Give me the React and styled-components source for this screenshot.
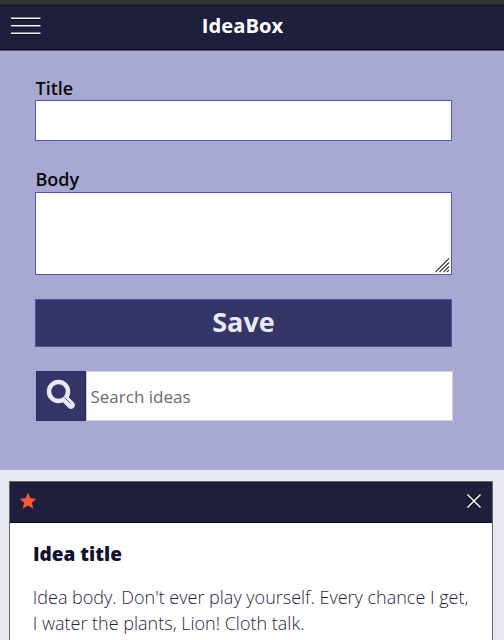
import React from 'react';
import styled, { createGlobalStyle } from 'styled-components';

const GlobalStyle = createGlobalStyle`
  * { box-sizing: border-box; }
  html, body { margin: 0; height: 640px; overflow: hidden; }
  body { background: #e8e8f3; font-family: "Open Sans", sans-serif; }
`;

const Page = styled.div`
  width: 504px;
  height: 640px;
  overflow: hidden;
`;

const TopStrip = styled.div`
  height: 5px;
  background: #333;
  border-bottom: 1px solid #29282c;
`;

const Header = styled.header`
  height: 46px;
  display: grid;
  grid-template-columns: 42px 1fr 57px;
  align-items: center;
  background: #1f1e3d;
  border-top: 1px solid #14132c;
  border-bottom: 1px solid #57567f;
  box-shadow: inset 0 -1px 0 #09082a;
`;

const MenuButton = styled.button`
  display: flex;
  width: 30px;
  margin: -4px 0 0 11px;
  padding: 0;
  border: 0;
  background: none;
`;

const AppTitle = styled.h1`
  margin: -6px 0 0 -4px;
  text-align: center;
  color: #fff;
  font-size: 20.2px;
  line-height: 28px;
  font-weight: 700;
`;

const Form = styled.form`
  height: 419px;
  padding: 25px 52px 0 35px;
  background: #a8a9d3;
  display: flex;
  flex-direction: column;
`;

const Label = styled.label`
  display: block;
  height: 24px;
  padding-left: 0.5px;
  line-height: 24px;
  font-size: 18px;
  font-weight: 600;
  color: #08080c;
`;

const TitleInput = styled.input`
  display: block;
  width: 417px;
  height: 41px;
  margin: 0 0 26px;
  border: 1px solid #5856ad;
  border-radius: 0;
  background: #fff;
`;

const BodyField = styled.div`
  display: flex;
  align-items: flex-end;
  justify-content: flex-end;
  width: 417px;
  height: 83px;
  margin: 1px 0 24px;
  padding: 1px;
  border: 1px solid #5856ad;
  background: #fff;
`;

const SaveButton = styled.button`
  width: 417px;
  height: 48px;
  margin-bottom: 24px;
  padding: 0 0 2px;
  border: 1px solid #5250a0;
  background: #353567;
  color: #e8e8f6;
  font: 700 27px/44px "Open Sans", sans-serif;
`;

const SearchRow = styled.div`
  display: flex;
  width: 417px;
  height: 50px;
  margin-left: 1px;
`;

const SearchIconBox = styled.div`
  width: 50px;
  background: #353567;
  border: 1px solid #28285f;
`;

const SearchInput = styled.input`
  flex: 1;
  min-width: 0;
  padding: 0 3.5px;
  border: 1px solid #cfcfe0;
  border-radius: 0;
  background: #fff;
  font: 400 17px "Open Sans", sans-serif;
  &::placeholder { color: #6b6b6b; opacity: 1; }
`;

const Card = styled.article`
  width: 484px;
  height: 190px;
  margin: 11px 0 0 9px;
  border: 1px solid #66666b;
  background: #fff;
`;

const CardBar = styled.div`
  height: 41px;
  padding: 0 11.5px 2px 9px;
  display: flex;
  align-items: center;
  justify-content: space-between;
  background: #1f1e3d;
  border-bottom: 1px solid #08080f;
`;

const CardTitle = styled.h2`
  margin: 17px 0 0 23px;
  color: #12122f;
  font-size: 19px;
  line-height: 28px;
  font-weight: 800;
`;

const CardBody = styled.p`
  margin: 17px 0 0 22.75px;
  color: #1f1e3d;
  font-size: 18px;
  line-height: 25.5px;
  font-weight: 300;
  white-space: nowrap;
`;

const MenuIcon = () => (
  <svg width="30" height="20" viewBox="0 0 30 20" fill="none">
    <path d="M0 3.500h29.500M0 11h29.500M0 18.500h29.500" stroke="#0b0a18" strokeWidth="1" />
    <path d="M0 2.250h29.500M0 9.750h29.500M0 17.250h29.500" stroke="#f4f4f8" strokeWidth="1.600" />
  </svg>
);

const ResizeGrip = () => (
  <svg width="15" height="15" viewBox="0 0 15 15" stroke="#3a3a3a" strokeWidth="1.100" fill="none">
    <path d="M.5 14 14 .5M4.500 14 14 4.500M8.500 14 14 8.500M12 14l2-2" />
  </svg>
);

const SearchIcon = () => (
  <svg width="48" height="48" viewBox="0 0 48 48" fill="none">
    <path d="m28.500 27.500 5.500 5.500" stroke="#e8e8f6" strokeWidth="7.500" strokeLinecap="round" />
    <circle cx="21.500" cy="19.500" r="9.500" fill="#353567" stroke="#e8e8f6" strokeWidth="4.500" />
    <path d="m27.500 25.500 6 6" stroke="#5f5f91" strokeWidth="1" />
  </svg>
);

const Star = () => (
  <svg width="18" height="18" viewBox="0 0 18 18">
    <path d="m9 .5 2.400 5.700 6.100.5-4.700 4 1.500 6L9 13.500l-5.300 3.200 1.500-6-4.700-4 6.100-.5Z" fill="#f45d35" />
  </svg>
);

const Close = () => (
  <svg width="14" height="14" viewBox="0 0 14 14" fill="none">
    <path d="m1 1 12 12M13 1 1 13" stroke="#0b0b12" strokeWidth="3.200" />
    <path d="m1 1 12 12M13 1 1 13" stroke="#f0f0ea" strokeWidth="1.700" strokeLinecap="round" />
  </svg>
);

export default function App() {
  return (
    <Page>
      <GlobalStyle />
      <TopStrip />
      <Header>
        <MenuButton aria-label="Menu"><MenuIcon /></MenuButton>
        <AppTitle>IdeaBox</AppTitle>
      </Header>
      <Form>
        <Label htmlFor="title">Title</Label>
        <TitleInput id="title" />
        <Label>Body</Label>
        <BodyField role="textbox" aria-label="Body"><ResizeGrip /></BodyField>
        <SaveButton type="button">Save</SaveButton>
        <SearchRow>
          <SearchIconBox><SearchIcon /></SearchIconBox>
          <SearchInput placeholder="Search ideas" />
        </SearchRow>
      </Form>
      <Card>
        <CardBar><Star /><Close /></CardBar>
        <CardTitle>Idea title</CardTitle>
        <CardBody>
          Idea body. Don't ever play yourself. Every chance I get,<br />
          I water the plants, Lion! Cloth talk.
        </CardBody>
      </Card>
    </Page>
  );
}
